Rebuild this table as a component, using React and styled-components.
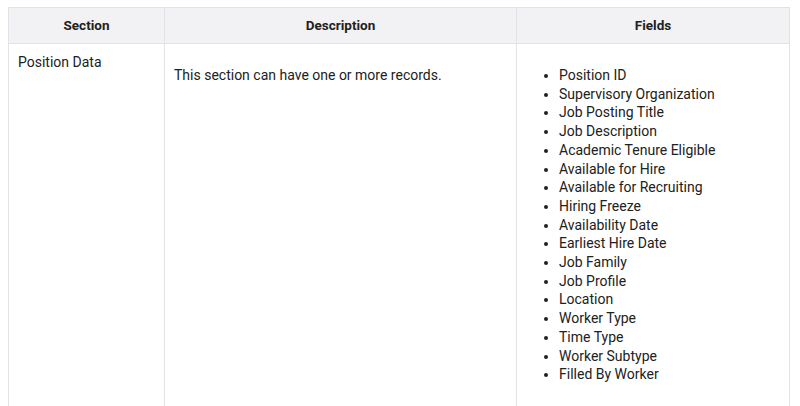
import React from "react";
import styled, { createGlobalStyle } from "styled-components";

const Global = createGlobalStyle`
  body {
    margin: 0;
    background: #fff;
    font-family: Roboto, "Noto Sans", sans-serif;
    color: #212121;
  }
`;

const Wrapper = styled.div`
  padding: 7px 11px 0 8px;
`;

const Table = styled.table`
  width: 781px;
  border-collapse: collapse;
  table-layout: fixed;
  font-size: 14px;
  line-height: 18.7px;
`;

const Th = styled.th`
  background: #f2f2f4;
  border: 1px solid #e2e2e8;
  font-size: 13.5px;
  font-weight: 700;
  text-align: center;
  height: 36px;
  padding: 0 10px;
  box-sizing: border-box;
`;

const Td = styled.td`
  border: 1px solid #e2e2e8;
  border-bottom: none;
  vertical-align: top;
  padding: 9px 9px 10px;
`;

const Text = styled.p`
  margin: 13px 0;
`;

const List = styled.ul`
  margin: 13px 0;
  padding-left: 33px;
`;

const fields = [
  "Position ID",
  "Supervisory Organization",
  "Job Posting Title",
  "Job Description",
  "Academic Tenure Eligible",
  "Available for Hire",
  "Available for Recruiting",
  "Hiring Freeze",
  "Availability Date",
  "Earliest Hire Date",
  "Job Family",
  "Job Profile",
  "Location",
  "Worker Type",
  "Time Type",
  "Worker Subtype",
  "Filled By Worker",
];

export default function App() {
  return (
    <Wrapper>
      <Global />
      <Table>
        <colgroup>
          <col style={{ width: "156px" }} />
          <col style={{ width: "352px" }} />
          <col style={{ width: "273px" }} />
        </colgroup>
        <thead>
          <tr>
            <Th>Section</Th>
            <Th>Description</Th>
            <Th>Fields</Th>
          </tr>
        </thead>
        <tbody>
          <tr>
            <Td>Position Data</Td>
            <Td>
              <Text>This section can have one or more records.</Text>
            </Td>
            <Td>
              <List>
                {fields.map((f) => (
                  <li key={f}>{f}</li>
                ))}
              </List>
            </Td>
          </tr>
        </tbody>
      </Table>
    </Wrapper>
  );
}
